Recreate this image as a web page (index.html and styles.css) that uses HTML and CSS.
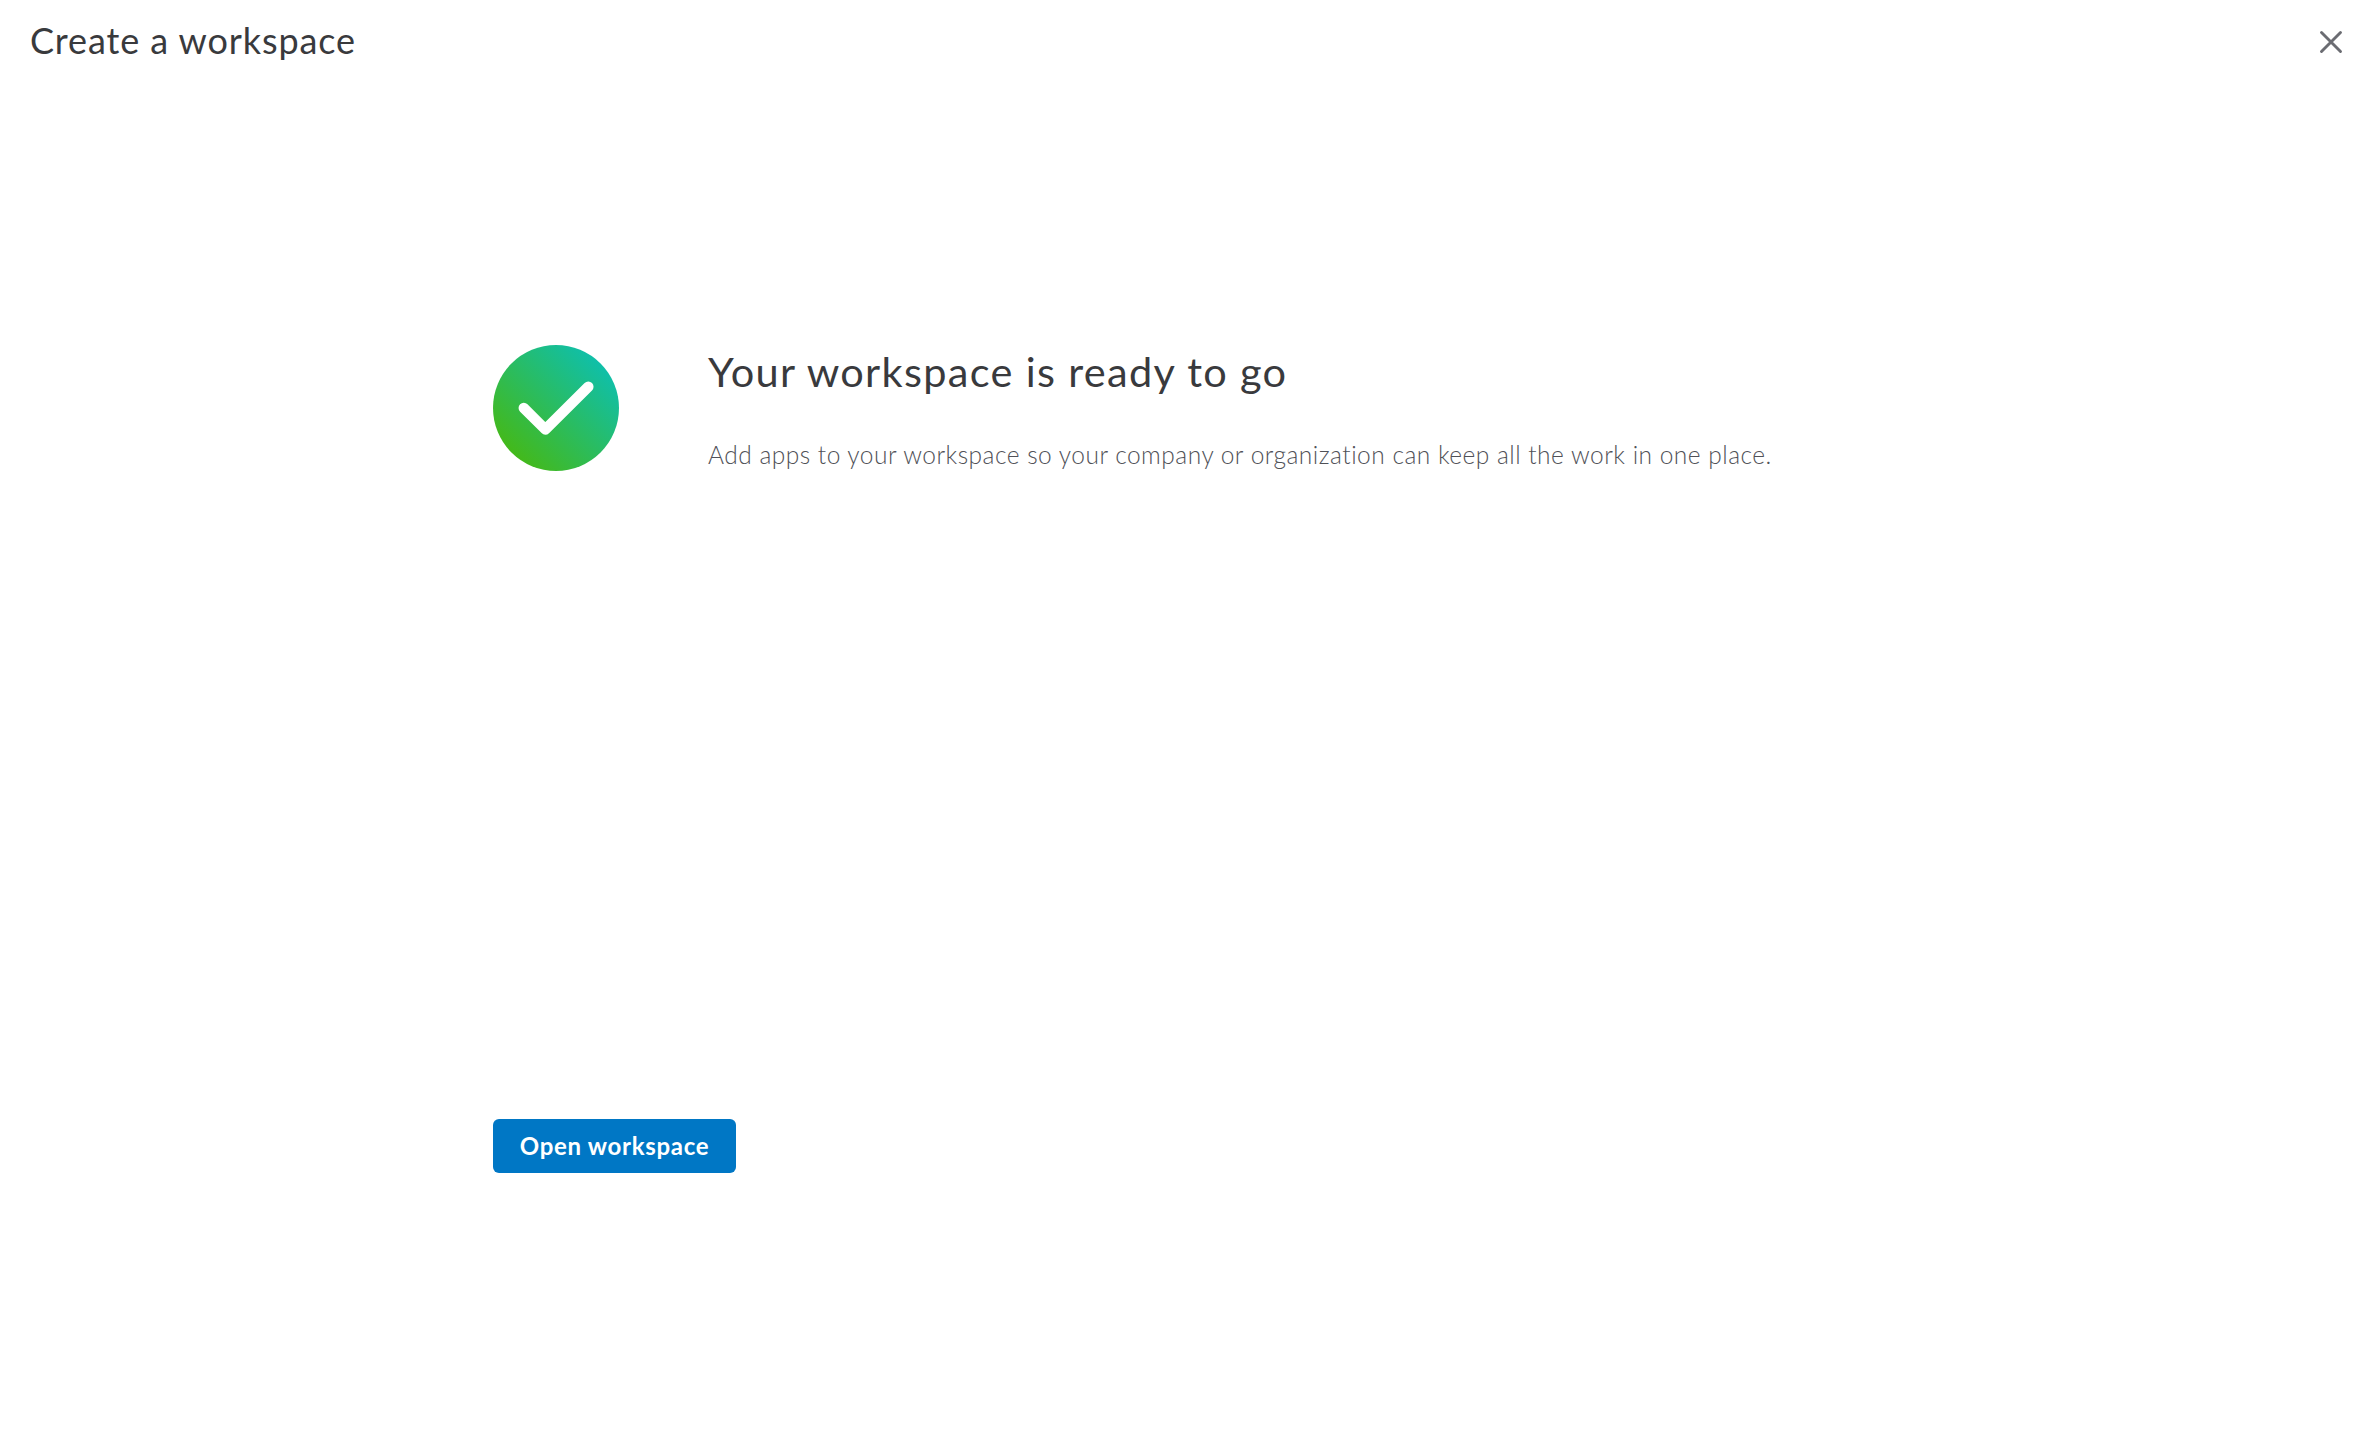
FILE: index.html
```html
<!DOCTYPE html>
<html lang="en">
<head>
<meta charset="utf-8">
<title>Create a workspace</title>
<link rel="stylesheet" href="styles.css">
</head>
<body class="page">
<header class="header">
<h1 class="header-title">Create a workspace</h1>
<button class="close" aria-label="Close"><svg class="close-icon" viewBox="0 0 24 24"><path d="M2.5 2.5L21.5 21.5M21.5 2.5L2.5 21.5"/></svg></button>
</header>
<main class="content">
<section class="message">
<svg class="success" viewBox="0 0 126 126"><defs><linearGradient id="fill" x1="0.15" y1="0.85" x2="0.85" y2="0.15"><stop offset="0" stop-color="#43b91b"/><stop offset="1" stop-color="#10bfa8"/></linearGradient></defs><circle cx="63" cy="63" r="63" fill="url(#fill)"/><path class="success-check" d="M30.8 63L52.3 84.4L95.3 41.7"/></svg>
<div class="copy">
<h2 class="copy-title">Your workspace is ready to go</h2>
<p class="copy-text">Add apps to your workspace so your company or organization can keep all the work in one place.</p>
</div>
</section>
<button class="open"><span class="open-label">Open workspace</span></button>
</main>
</body>
</html>
```
FILE: styles.css
```css
.page {
  margin: 0;
  background: #fff;
  color: #393a3d;
  font-family: Lato, "Open Sans", sans-serif;
}
.header {
  display: flex;
  justify-content: space-between;
  align-items: flex-start;
  box-sizing: border-box;
  height: 82px;
  padding: 18px 30px 0;
}
.header-title {
  margin: 0;
  font-size: 36px;
  line-height: 44px;
  font-weight: 400;
  letter-spacing: 0.9px;
  white-space: nowrap;
}
.close {
  display: flex;
  margin-top: 12px;
  padding: 0;
  border: 0;
  background: none;
}
.close-icon {
  width: 24px;
  height: 24px;
  fill: none;
  stroke: #6b6c72;
  stroke-width: 2.9;
  stroke-linecap: round;
}
.content {
  padding: 263px 493px 0;
}
.message {
  display: flex;
  gap: 89px;
  height: 773px;
}
.success {
  flex: none;
  width: 126px;
  height: 126px;
}
.success-check {
  fill: none;
  stroke: #fff;
  stroke-width: 10.5;
  stroke-linecap: round;
  stroke-linejoin: round;
}
.copy-title {
  margin: 1px 0 33px;
  font-size: 41.5px;
  line-height: 50px;
  font-weight: 400;
  letter-spacing: 1.32px;
  white-space: nowrap;
}
.copy-text {
  margin: 0;
  font-size: 24.5px;
  line-height: 52px;
  font-weight: 300;
  letter-spacing: 0.49px;
  color: #505157;
  white-space: nowrap;
}
.open {
  display: flex;
  justify-content: center;
  align-items: center;
  width: 243px;
  height: 54px;
  margin: 1px 0 0;
  padding: 0;
  border: 0;
  border-radius: 6px;
  background: #0077c5;
  color: #fff;
}
.open-label {
  font: 700 24px/30px Lato, "Open Sans", sans-serif;
  letter-spacing: 0.7px;
  white-space: nowrap;
}
```
